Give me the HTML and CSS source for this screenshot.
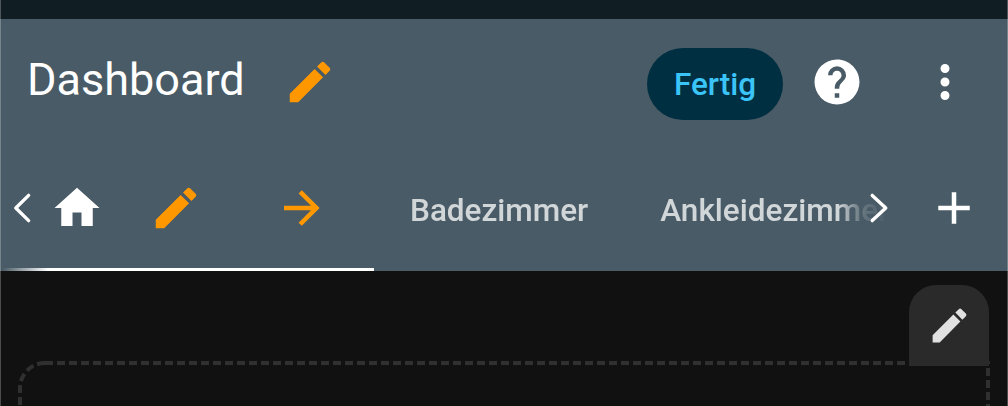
FILE: index.html
```html
<!DOCTYPE html>
<html lang="en">
<head>
    <meta charset="UTF-8">
    <meta name="viewport" content="width=device-width, initial-scale=1.0">
    <title>Dashboard</title>
    <link rel="stylesheet" href="styles.css">
</head>
<body>
    <div class="status-bar"></div>

    <header>
        <div class="title-row">
            <h1>Dashboard</h1>
            <svg class="icon title-edit" viewBox="0 0 24 24"><path d="M20.71,7.04C21.1,6.65 21.1,6 20.71,5.63L18.37,3.29C18,2.9 17.35,2.9 16.96,3.29L15.12,5.12L18.87,8.87M3,17.25V21H6.75L17.81,9.93L14.06,6.18L3,17.25Z"/></svg>
            <button class="done-btn">Fertig</button>
            <svg class="icon help" viewBox="0 0 24 24"><path d="M15.07,11.25L14.17,12.17C13.45,12.89 13,13.5 13,15H11V14.5C11,13.39 11.45,12.39 12.17,11.67L13.41,10.41C13.78,10.05 14,9.55 14,9C14,7.89 13.1,7 12,7A2,2 0 0,0 10,9H8A4,4 0 0,1 12,5A4,4 0 0,1 16,9C16,9.88 15.64,10.67 15.07,11.25M13,19H11V17H13M12,2A10,10 0 0,0 2,12A10,10 0 0,0 12,22A10,10 0 0,0 22,12C22,6.47 17.5,2 12,2Z"/></svg>
            <svg class="icon more" viewBox="0 0 24 24"><path d="M12,16A2,2 0 0,1 14,18A2,2 0 0,1 12,20A2,2 0 0,1 10,18A2,2 0 0,1 12,16M12,10A2,2 0 0,1 14,12A2,2 0 0,1 12,14A2,2 0 0,1 10,12A2,2 0 0,1 12,10M12,4A2,2 0 0,1 14,6A2,2 0 0,1 12,8A2,2 0 0,1 10,6A2,2 0 0,1 12,4Z"/></svg>
        </div>

        <div class="tab-row">
            <div class="tabs-wrap">
                <div class="tabs">
                    <div class="tab-active">
                        <svg class="icon home" viewBox="0 0 24 24"><path d="M10,20V14H14V20H19V12H22L12,3L2,12H5V20H10Z"/></svg>
                        <svg class="icon tab-edit" viewBox="0 0 24 24"><path d="M20.71,7.04C21.1,6.65 21.1,6 20.71,5.63L18.37,3.29C18,2.9 17.35,2.9 16.96,3.29L15.12,5.12L18.87,8.87M3,17.25V21H6.75L17.81,9.93L14.06,6.18L3,17.25Z"/></svg>
                        <svg class="icon tab-move" viewBox="0 0 24 24"><path d="M4,11V13H16L10.5,18.5L11.92,19.92L19.84,12L11.92,4.08L10.5,5.5L16,11H4Z"/></svg>
                    </div>
                    <div class="tab">Badezimmer</div>
                    <div class="tab">Ankleidezimmer</div>
                </div>
                <svg class="icon scroll-left" viewBox="0 0 24 24"><path d="M14.5,6.4L8.8,12L14.5,17.6"/></svg>
                <svg class="icon scroll-right" viewBox="0 0 24 24"><path d="M9,6.4L15,12L9,17.6"/></svg>
            </div>
            <svg class="icon add" viewBox="0 0 24 24"><path d="M19,13H13V19H11V13H5V11H11V5H13V11H19V13Z"/></svg>
        </div>
    </header>

    <main>
        <div class="edit-tab">
            <svg viewBox="0 0 24 24"><path d="M20.71,7.04C21.1,6.65 21.1,6 20.71,5.63L18.37,3.29C18,2.9 17.35,2.9 16.96,3.29L15.12,5.12L18.87,8.87M3,17.25V21H6.75L17.81,9.93L14.06,6.18L3,17.25Z"/></svg>
        </div>
        <svg class="drop-zone" width="972" height="45"><path d="M27,2H970V60M27,2A25,25 0 0 0 2,27V60"/></svg>
    </main>
</body>
</html>
```

FILE: styles.css
```css
* {
    box-sizing: border-box;
}

html, body {
    height: 100%;
}

body {
    margin: 0;
    background: #111111;
    font-family: Roboto, "Liberation Sans", sans-serif;
    overflow: hidden;
}

/* 1px lighter line down both window edges */
body::after {
    content: "";
    position: fixed;
    top: 0;
    bottom: 0;
    left: 0;
    right: 0;
    border-left: 1px solid rgba(255, 255, 255, 0.25);
    border-right: 1px solid rgba(255, 255, 255, 0.25);
    pointer-events: none;
}

.status-bar {
    height: 19px;
    background: #101e24;
}

header {
    background: #495b66;
    color: #fff;
}

.icon {
    display: block;
    flex: none;
    width: 54px;
    height: 54px;
    fill: #fff;
}

.title-row {
    display: flex;
    align-items: center;
    height: 126px;
    padding-left: 27px;
}

h1 {
    margin: 0 0 6px;
    font-size: 45px;
    font-weight: 400;
    line-height: 1;
    width: 256px;
}

.title-edit {
    fill: #ff9800;
}

.done-btn {
    width: 136px;
    height: 72px;
    margin: 4px 0 0 310px;
    border: none;
    border-radius: 36px;
    background: #012f42;
    color: #3bc4f7;
    font-family: inherit;
    font-size: 31.5px;
    font-weight: 500;
    padding: 0;
}

.help {
    margin-left: 27px;
}

.more {
    margin-left: 54px;
}

.tab-row {
    display: flex;
    align-items: stretch;
    height: 126px;
}

.tabs-wrap {
    position: relative;
    width: 906px;
    padding-right: 16px;
}

.tabs {
    display: flex;
    height: 100%;
    overflow: hidden;
    -webkit-mask-image: linear-gradient(to right, transparent 2px, #000 48px, #000 838px, rgba(0, 0, 0, 0.25) 860px, transparent 890px);
    mask-image: linear-gradient(to right, transparent 2px, #000 48px, #000 838px, rgba(0, 0, 0, 0.25) 860px, transparent 890px);
}

.tab-active {
    display: flex;
    flex: none;
    align-items: center;
    width: 374px;
    padding-left: 50px;
    box-shadow: inset 0 -3px 0 #fff;
}

.tab-edit {
    margin-left: 45px;
    fill: #ff9800;
}

.tab-move {
    margin-left: 72px;
    fill: #ff9800;
}

.tab {
    display: flex;
    flex: none;
    align-items: center;
    padding: 4px 36px 0;
    font-size: 31.5px;
    font-weight: 500;
    color: rgba(255, 255, 255, 0.75);
}

.scroll-left,
.scroll-right {
    position: absolute;
    top: 36px;
    fill: none;
    stroke: #fff;
    stroke-width: 1.5;
    stroke-linecap: round;
    stroke-linejoin: round;
}

.scroll-left {
    left: -4px;
}

.scroll-right {
    right: 0;
}

.add {
    align-self: center;
    margin-left: 21px;
}

main {
    display: flex;
    flex-direction: column;
    padding-top: 14px;
}

.edit-tab {
    position: relative;
    display: flex;
    align-items: center;
    justify-content: center;
    align-self: flex-end;
    width: 80px;
    height: 81px;
    margin-right: 19px;
    border-radius: 27px 27px 0 0;
    background: #2a2a2a;
}

.edit-tab svg {
    width: 45px;
    height: 45px;
    fill: #e1e1e1;
}

.drop-zone {
    display: block;
    flex: none;
    margin: -5px 0 0 18px;
}

.drop-zone path {
    fill: none;
    stroke: #303030;
    stroke-width: 4;
    stroke-dasharray: 8 4;
}
```
